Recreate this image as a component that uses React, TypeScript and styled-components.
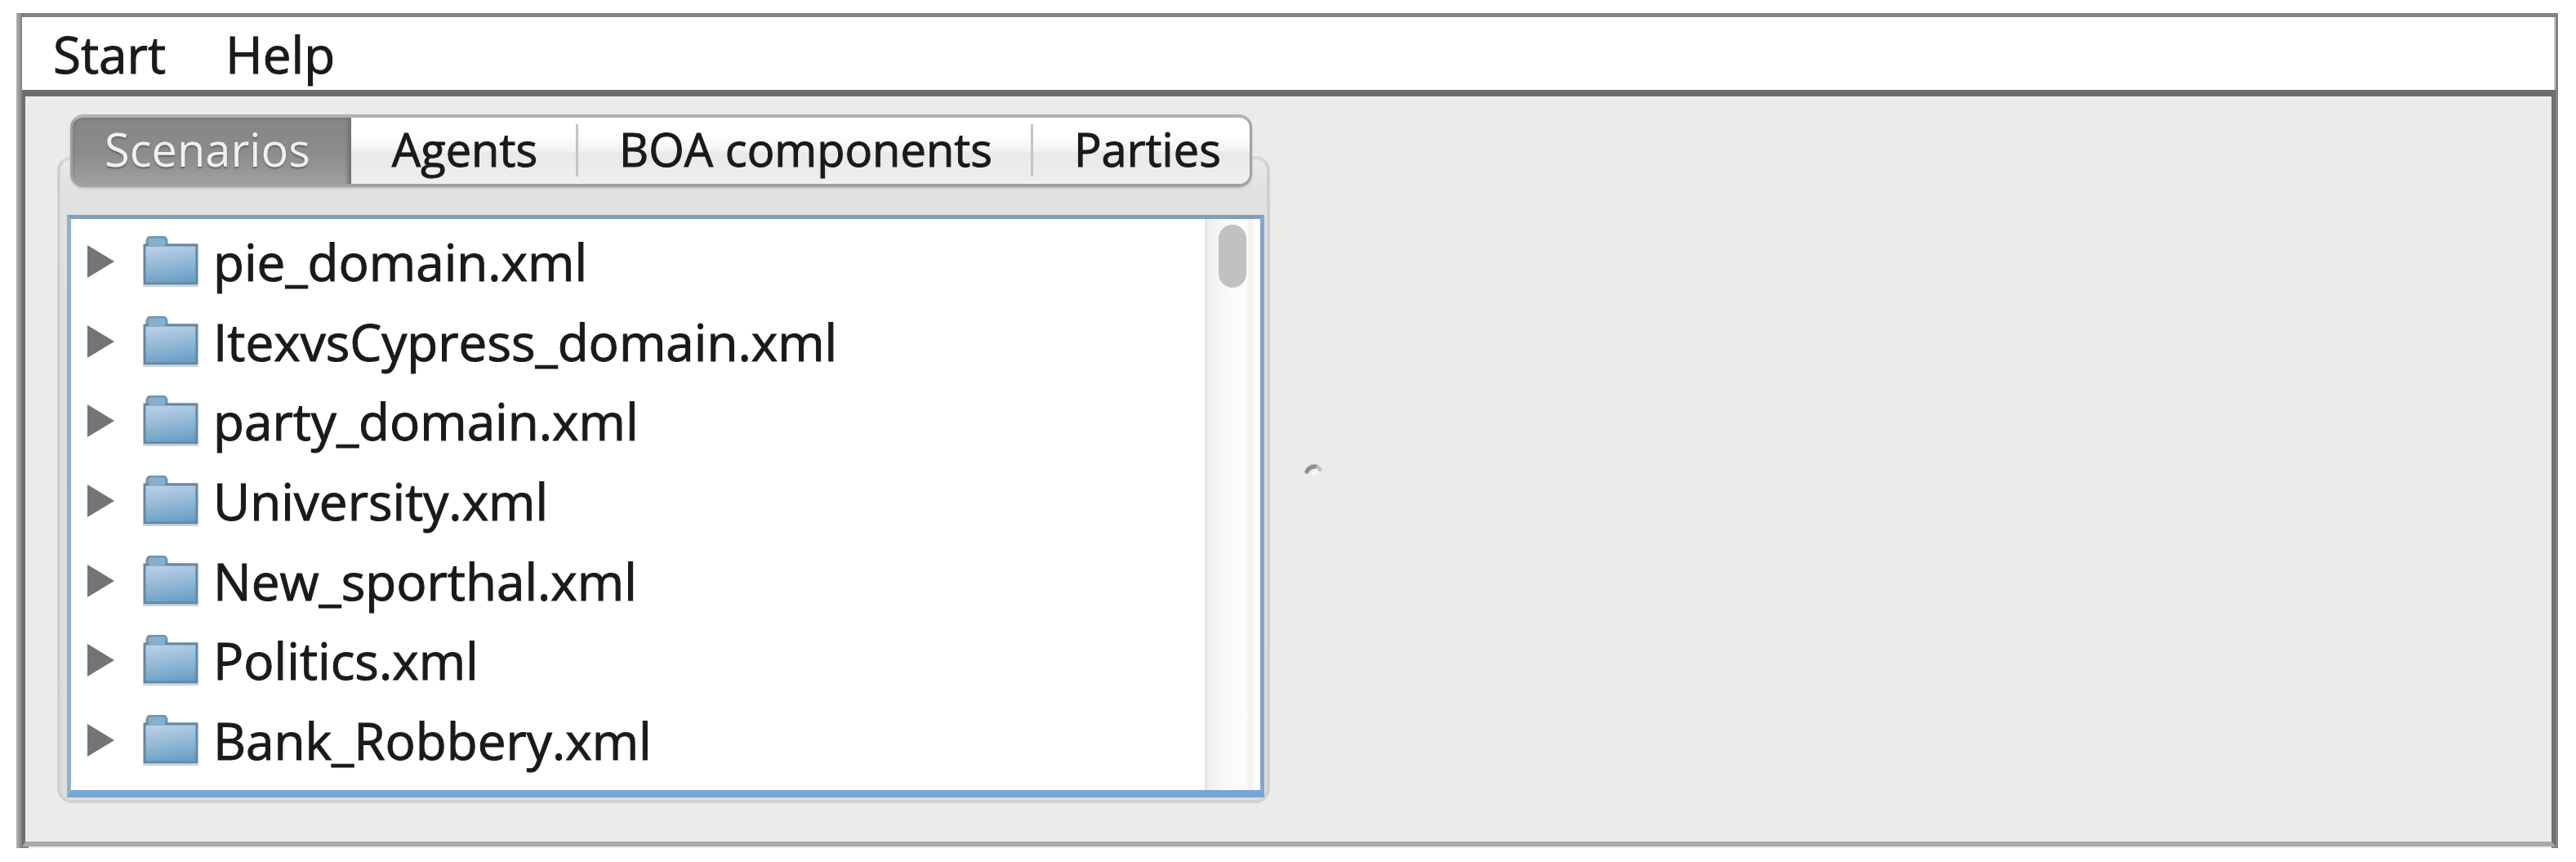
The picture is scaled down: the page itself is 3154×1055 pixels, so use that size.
import React, { useState } from "react";
import styled, { createGlobalStyle } from "styled-components";

const GlobalStyle = createGlobalStyle`
  *, *::before, *::after { box-sizing: border-box; }
  body {
    margin: 0;
    background: #ffffff;
    color: #1a1a1a;
    font-family: "Open Sans", "Noto Sans", sans-serif;
    -webkit-text-stroke: 1px currentColor;
  }
  button {
    margin: 0;
    padding: 0;
    border: 0;
    background: none;
    color: inherit;
    font: inherit;
    cursor: default;
  }
`;

const Page = styled.div`
  display: flex;
  min-height: 100vh;
  padding: 16px 22px 17px 20px;
`;

const Window = styled.div`
  display: flex;
  flex: 1;
  flex-direction: column;
  min-width: 0;
  padding: 5px 3px 0 7px;
  background: linear-gradient(to right, #b4b4b4 0, #787878 8px, #838383 9px);
`;

const MenuBar = styled.nav`
  display: flex;
  gap: 73px;
  height: 89px;
  padding: 0 38px;
  background: #ffffff;
  border-right: 2px solid #c9c9c9;
`;

const MenuItem = styled.button`
  font-size: 62px;
  line-height: 88px;
`;

const Body = styled.main`
  display: grid;
  flex: 1;
  grid-template-columns: minmax(0, 1485fr) 105px minmax(0, 1464fr);
  padding: 22px 0 47px 39px;
  background: #ebebeb;
  border: solid #6e6e6e;
  border-width: 8px 5px 6px 4px;
  border-bottom-color: #a8a8a8;
`;

const BottomEdge = styled.div`
  height: 2px;
  margin: 0 5px 0 8px;
  background: #ececec;
`;

const TabbedPane = styled.section`
  display: flex;
  flex-direction: column;
`;

const TabBar = styled.div`
  z-index: 1;
  display: flex;
  height: 89px;
  margin: 0 22px -38px 16px;
  overflow: hidden;
  background: linear-gradient(#ffffff 25%, #f4f4f4 48%, #e9e9e9 54%, #efefef);
  border: solid #a0a0a0;
  border-width: 4px 3px;
  border-top-color: #b2b2b2;
  border-radius: 16px;
  box-shadow: 0 2px 3px #c4c4c4;
`;

const Tab = styled.button<{ $selected: boolean }>`
  position: relative;
  flex: none;
  padding: 0 50px 5px;
  font-size: 56px;
  line-height: 76px;
  text-align: left;
  white-space: nowrap;

  &:first-child { padding-left: 42px; }
  &:last-child { flex: 1; padding-right: 0; }

  &:not(:last-child)::after {
    content: "";
    position: absolute;
    top: 8px;
    right: 0;
    bottom: 9px;
    width: ${(p) => (p.$selected ? "0" : "3px")};
    background: #c4c4c4;
  }

  ${(p) =>
    p.$selected &&
    `
    margin: -4px 0 -4px -3px;
    color: #f0f0f0;
    -webkit-text-stroke: 0;
    text-shadow: 0 2px 2px #626262;
    background: linear-gradient(#858585, #8c8c8c 55%, #a2a2a2);
    border-radius: 16px 0 0 16px;
    box-shadow: inset 0 4px 5px #6a6a6a, inset -4px 0 5px #747474,
      inset 3px 0 4px #7d7d7d, inset 0 -3px 2px #898989;
  `}
`;

const Panel = styled.div`
  display: flex;
  flex: 1;
  padding: 68px 3px 3px 8px;
  background: linear-gradient(#e8e8e8, #e1e1e1 40px, #dddddd);
  border: 4px solid #d0d0d0;
  border-top-color: #d6d6d6;
  border-radius: 18px;
`;

const TreeBox = styled.div`
  display: flex;
  flex: 1;
  min-width: 0;
  background: #ffffff;
  border: 5px solid #8fb0d0;
  border-top-color: #829db9;
  border-right-color: #86a5cb;
  border-bottom: 9px solid #75a5d6;
`;

const Tree = styled.ul`
  display: flex;
  flex: 1;
  flex-direction: column;
  min-width: 0;
  margin: 0;
  padding: 3px 0 12px 20px;
  list-style: none;
`;

const TreeRow = styled.li`
  display: flex;
  flex: 1 1 97px;
  align-items: center;
  max-height: 98px;
`;

const Disclosure = styled.button`
  display: flex;
  width: 68px;
`;

const FileName = styled.span`
  padding-left: 18px;
  font-size: 62px;
  line-height: 84px;
  white-space: nowrap;
`;

const ScrollTrack = styled.div`
  display: flex;
  justify-content: center;
  width: 68px;
  padding: 7px 0;
  background: linear-gradient(to right, #e2e2e2, #f0f0f0 6px, #fafafa 28px, #fcfcfc 50px, #f1f1f1 56px, #ffffff 62px);
`;

const ScrollThumb = styled.div`
  width: 34px;
  height: 77px;
  background: #c1c1c1;
  border-radius: 17px;
`;

const Splitter = styled.div`
  display: flex;
  align-items: center;
  justify-content: center;
  padding-top: 26px;
`;

const Triangle = () => (
  <svg width="33" height="40" viewBox="0 0 33 40" aria-hidden="true">
    <path d="M0 0L33 20L0 40Z" fill="#747474" />
  </svg>
);

const Folder = () => (
  <svg width="68" height="62" viewBox="0 0 68 62" aria-hidden="true">
    <defs>
      <linearGradient id="folderFront" x1="0.3" y1="0" x2="0.5" y2="1">
        <stop offset="0" stopColor="#b9d1e8" />
        <stop offset="0.5" stopColor="#94b9d6" />
        <stop offset="1" stopColor="#6a9fc5" />
      </linearGradient>
    </defs>
    <path d="M5 12V5Q6 1 10 1H24Q28 1 29 5V11H65V17H5Z" fill="#86afcd" stroke="#7195b0" strokeWidth="3" />
    <path d="M2 11H66V58H2Z" fill="url(#folderFront)" stroke="#6288a4" strokeWidth="3" />
    <path d="M7 9H27V13H7Z" fill="#86afcd" />
    <path d="M0 61H68" stroke="#c9d5de" strokeWidth="2" />
  </svg>
);

const SplitGrip = () => (
  <svg width="22" height="18" viewBox="0 0 22 18" aria-hidden="true">
    <path d="M3 12Q5 4 12 4Q17 4 19 9" fill="none" stroke="#c4c4c4" strokeWidth="5" strokeLinecap="round" />
    <path d="M3 11Q6 6 13 5" fill="none" stroke="#909090" strokeWidth="5" strokeLinecap="round" />
    <path d="M11 14Q12 11 16 12" fill="none" stroke="#f8f8f8" strokeWidth="4" strokeLinecap="round" />
  </svg>
);

const tabs = ["Scenarios", "Agents", "BOA components", "Parties"];

const files = [
  "pie_domain.xml",
  "ItexvsCypress_domain.xml",
  "party_domain.xml",
  "University.xml",
  "New_sporthal.xml",
  "Politics.xml",
  "Bank_Robbery.xml",
];

export default function App() {
  const [selected, setSelected] = useState(tabs[0]);

  return (
    <Page>
      <GlobalStyle />
      <Window>
        <MenuBar>
          <MenuItem type="button">Start</MenuItem>
          <MenuItem type="button">Help</MenuItem>
        </MenuBar>
        <Body>
          <TabbedPane>
            <TabBar role="tablist">
              {tabs.map((tab) => (
                <Tab
                  key={tab}
                  type="button"
                  role="tab"
                  aria-selected={tab === selected}
                  $selected={tab === selected}
                  onClick={() => setSelected(tab)}
                >
                  {tab}
                </Tab>
              ))}
            </TabBar>
            <Panel role="tabpanel">
              <TreeBox>
                <Tree>
                  {files.map((file) => (
                    <TreeRow key={file}>
                      <Disclosure type="button" aria-label={`Expand ${file}`}>
                        <Triangle />
                      </Disclosure>
                      <Folder />
                      <FileName>{file}</FileName>
                    </TreeRow>
                  ))}
                </Tree>
                <ScrollTrack>
                  <ScrollThumb />
                </ScrollTrack>
              </TreeBox>
            </Panel>
          </TabbedPane>
          <Splitter>
            <SplitGrip />
          </Splitter>
        </Body>
        <BottomEdge />
      </Window>
    </Page>
  );
}
